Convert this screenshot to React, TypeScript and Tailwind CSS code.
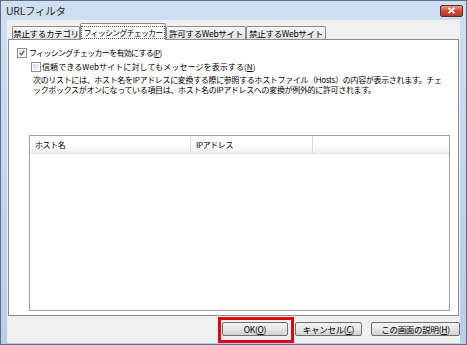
import React from 'react';

const jp = "font-['Noto_Sans_CJK_JP','Liberation_Sans',sans-serif]";

const Tab: React.FC<{ label: string; width: string; active?: boolean }> = ({ label, width, active }) => {
  if (active) {
    return (
      <div
        className={`${width} h-[17px] -mb-px relative z-10 flex items-center justify-center bg-white border border-b-0 border-[#898c95] rounded-t-[2px] whitespace-nowrap`}
      >
        <span className="px-[1px] leading-[11px] border border-dotted border-[#555] text-[8px] tracking-[-0.8px] text-black">
          {label}
        </span>
      </div>
    );
  }
  return (
    <div
      className={`${width} h-[13px] flex items-center justify-center bg-gradient-to-b from-[#f6f6f6] to-[#e2e2e2] border border-b-0 border-[#898c95] rounded-t-[2px] text-[8.5px] tracking-[-0.3px] text-black whitespace-nowrap`}
    >
      {label}
    </div>
  );
};

const Checkbox: React.FC<{ checked?: boolean }> = ({ checked }) => (
  <div className="w-[10px] h-[10px] shrink-0 border border-[#8e8f8f] bg-white p-[1px]">
    <div className="w-full h-full bg-gradient-to-br from-[#d8d8d8] to-[#f6f6f6] flex items-center justify-center">
      {checked && (
        <svg width="8" height="8" viewBox="0 0 8 8">
          <path d="M1 4.2 L3.1 6.4 L7 1.2" fill="none" stroke="#3c4f8c" strokeWidth="1.6" />
        </svg>
      )}
    </div>
  </div>
);

const Button: React.FC<{ children: React.ReactNode; width: string }> = ({ children, width }) => (
  <div
    className={`${width} h-[14px] flex items-center justify-center rounded-[2px] border border-[#707070] bg-gradient-to-b from-[#f3f3f3] via-[#e6e6e6] to-[#d2d2d2] text-[8.5px] tracking-[-0.3px] text-black whitespace-nowrap`}
  >
    {children}
  </div>
);

export default function App() {
  return (
    <div
      className={`${jp} w-[467px] h-[345px] flex flex-col bg-gradient-to-b from-[#cfdff2] to-[#b7cfea] border border-[#5a6f8a] overflow-hidden`}
    >
      {/* Title bar */}
      <div className="h-[19px] flex items-center justify-between pl-[5px] pr-[3px] shrink-0">
        <span className="text-[10.5px] tracking-[-0.3px] text-[#2a2a2a]">URLフィルタ</span>
        <div className="w-[23px] h-[12px] flex items-center justify-center rounded-[2px] border border-[#6d2a22] bg-gradient-to-b from-[#e89a8c] via-[#cc4b38] to-[#b13a28]">
          <svg width="9" height="7" viewBox="0 0 9 7">
            <path d="M1.5 0.8 L7.5 6.2 M7.5 0.8 L1.5 6.2" stroke="#ffffff" strokeWidth="1.8" />
          </svg>
        </div>
      </div>

      {/* Client area */}
      <div className="flex-1 mx-[6px] mb-[2px] bg-[#f0f0f0] flex flex-col">
        {/* Tabs */}
        <div className="h-[19px] flex items-end pl-[5px] shrink-0">
          <Tab label="禁止するカテゴリ" width="w-[68px]" />
          <Tab label="フィッシングチェッカー" width="w-[86px]" active />
          <Tab label="許可するWebサイト" width="w-[80px]" />
          <Tab label="禁止するWebサイト" width="w-[80px]" />
        </div>

        {/* Tab panel */}
        <div className="h-[277px] mx-[1px] bg-white border border-[#898c95] flex flex-col pt-[7px] pl-[8px] pr-[8px] pb-[4px] text-[8px] text-black">
          <div className="flex items-center h-[11px]">
            <Checkbox checked />
            <span className="ml-[2px] tracking-[-0.7px] whitespace-nowrap">
              フィッシングチェッカーを有効にする(<span className="underline">P</span>)
            </span>
          </div>
          <div className="flex items-center h-[11px] mt-[3px] pl-[14px]">
            <Checkbox />
            <span className="ml-[1px] tracking-[0.1px] whitespace-nowrap">
              信頼できるWebサイトに対してもメッセージを表示する(<span className="underline">N</span>)
            </span>
          </div>
          <div className="mt-[3px] pl-[16px] leading-[10px] tracking-[-0.33px] whitespace-nowrap">
            <div>次のリストには、ホスト名をIPアドレスに変換する際に参照するホストファイル（Hosts）の内容が表示されます。チェ</div>
            <div>ックボックスがオンになっている項目は、ホスト名のIPアドレスへの変換が例外的に許可されます。</div>
          </div>

          {/* List view */}
          <div className="mt-auto ml-[12px] h-[176px] border border-[#a0a0a0] bg-white flex flex-col">
            <div className="h-[18px] flex bg-gradient-to-b from-white via-white to-[#eef0f3] border-b border-[#e3e5e8]">
              <div className="w-[161px] flex items-center pl-[5px] border-r border-[#d8dade] tracking-[-0.4px]">ホスト名</div>
              <div className="w-[122px] flex items-center pl-[5px] border-r border-[#d8dade] tracking-[-0.4px]">IPアドレス</div>
              <div className="flex-1" />
            </div>
          </div>
        </div>

        {/* Buttons */}
        <div className="flex-1 flex items-start justify-end">
          <div className="w-[76px] h-[26px] mt-[1px] border-[3px] border-[#e60012] pl-[1px] pt-[2px]">
            <Button width="w-[66px]">
              OK(<span className="underline">O</span>)
            </Button>
          </div>
          <div className="mt-[6px] ml-[1px]">
            <Button width="w-[67px]">
              キャンセル(<span className="underline">C</span>)
            </Button>
          </div>
          <div className="mt-[6px] ml-[9px]">
            <Button width="w-[89px]">
              この画面の説明(<span className="underline">H</span>)
            </Button>
          </div>
        </div>
      </div>
    </div>
  );
}
